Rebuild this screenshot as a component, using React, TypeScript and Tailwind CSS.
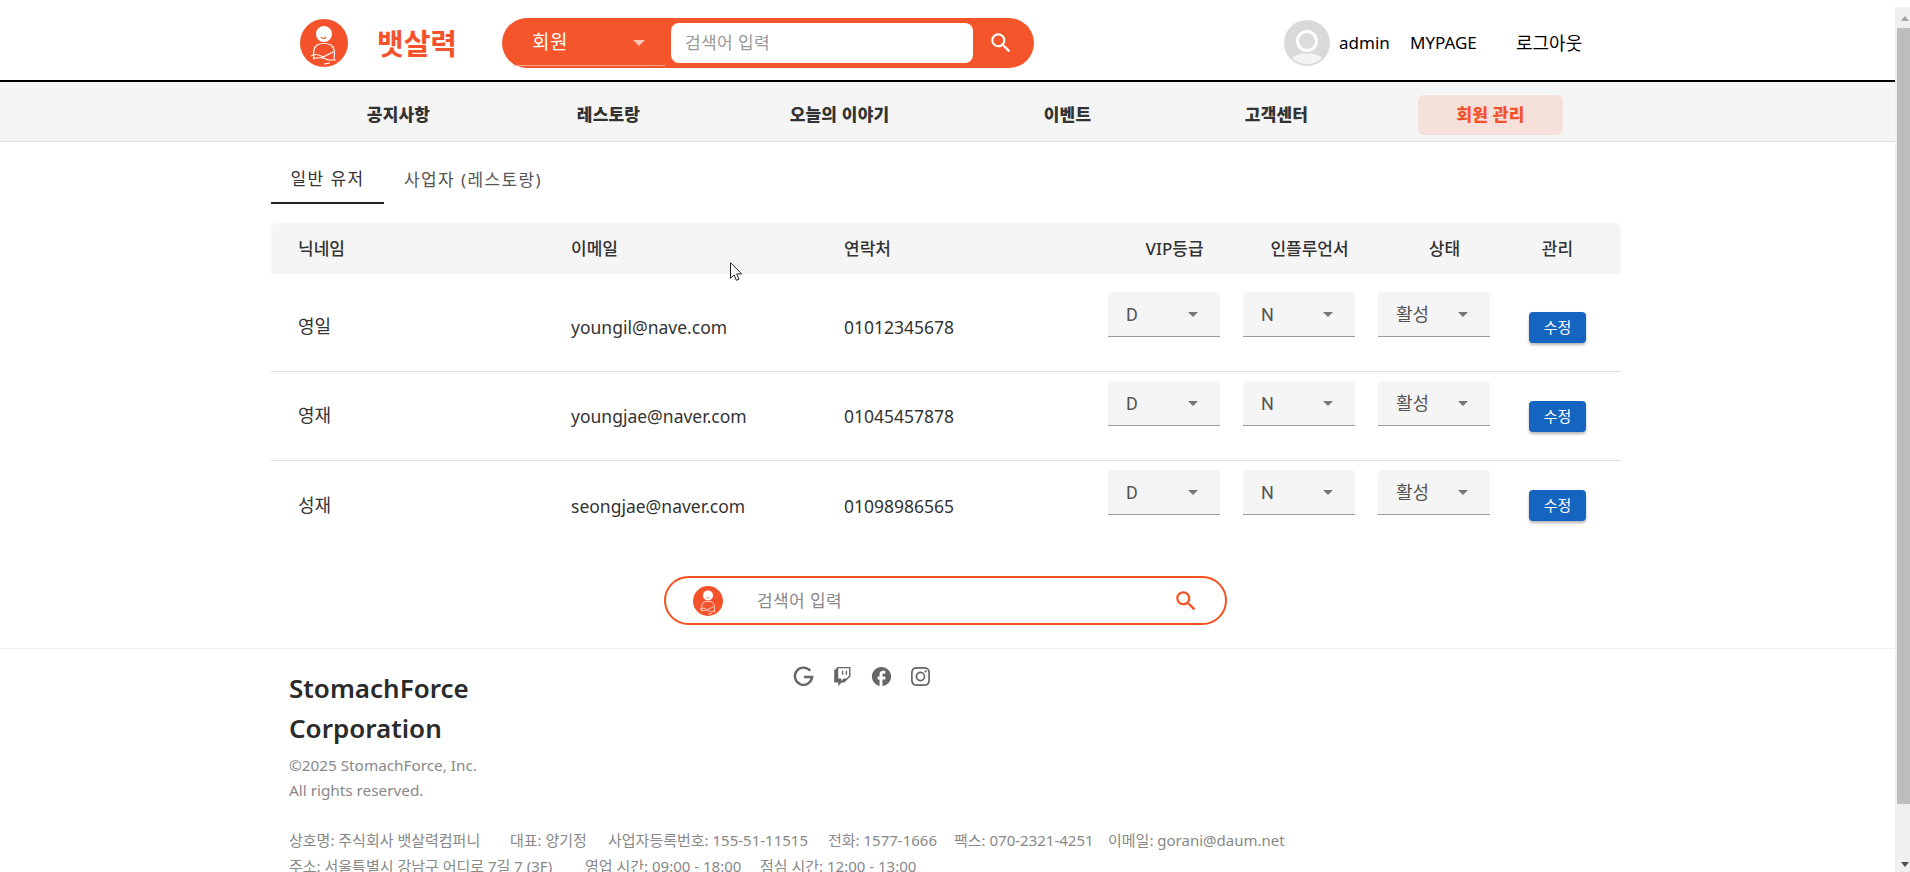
import { BsInstagram, BsTwitch } from 'react-icons/bs';
import { MdFacebook, MdSearch } from 'react-icons/md';

const navItems = ['공지사항', '레스토랑', '오늘의 이야기', '이벤트', '고객센터'];

const members = [
  { nick: '영일', email: 'youngil@nave.com', phone: '01012345678' },
  { nick: '영재', email: 'youngjae@naver.com', phone: '01045457878' },
  { nick: '성재', email: 'seongjae@naver.com', phone: '01098986565' },
];

const rowGrid = 'grid grid-cols-[300px_273px_248px_135px_135px_135px_121px]';

// Round mascot used by both search areas
function Logo({ className }: { className: string }) {
  return (
    <svg viewBox="0 0 48 48" className={className}>
      <circle cx="24" cy="24" r="24" fill="#f4522b" />
      <circle cx="24" cy="15" r="8" fill="#fff" />
      <path d="M21 18c1 2 3 2 5 0" fill="none" stroke="#f4522b" strokeWidth="1.2" />
      <path
        d="M14 40c-1-6 0-12 3-14 4-2 10-2 14 0 3 2 4 8 3 14"
        fill="#f4522b"
        stroke="#fff"
        strokeWidth="1.2"
      />
      <path
        d="M11 37c5-3 9-1 12 1l10-5M13 40c6-2 12-1 15 1l8 0M24 45l6-1"
        fill="none"
        stroke="#fff"
        strokeWidth="1.1"
      />
    </svg>
  );
}

function Select({ value }: { value: string }) {
  return (
    <div className="flex h-[45px] w-[112px] items-center justify-between rounded-t-[4px] border-b border-[#9a9a9a] bg-[#f5f5f5] pl-[18px] pr-[22px] font-['Roboto','Noto_Sans_CJK_KR',sans-serif] text-[18px] text-[#555]">
      <span>{value}</span>
      <span className="h-0 w-0 border-x-[5.5px] border-t-[5.5px] border-x-transparent border-t-[#757575]" />
    </div>
  );
}

function Header() {
  return (
    <header className="h-[82px] border-b-2 border-black">
      <div className="mx-auto flex h-[80px] w-[1353px] items-center pl-[29px] pt-[6px]">
        <div className="flex w-[202px] items-center">
          <Logo className="h-12 w-12" />
          <span className="ml-[29px] text-[29px] font-bold leading-none text-[#f4522b]">뱃살력</span>
        </div>
        <div className="flex h-[50px] w-[532px] items-center rounded-full bg-[#f4552b] pl-3">
          <div className="flex h-[46px] w-[151px] items-center justify-between border-b border-[#f9a58c] pl-[18px] pr-[20px] text-[19px] tracking-[0.5px] text-white">
            <span>회원</span>
            <span className="h-0 w-0 border-x-[6px] border-t-[6px] border-x-transparent border-t-[#fbc4b3]" />
          </div>
          <div className="ml-[6px] flex h-10 w-[302px] items-center rounded-lg bg-white pl-[14px] text-[17px] tracking-[0.4px] text-[#999]">
            검색어 입력
          </div>
          <MdSearch className="ml-[15px] text-white" size={26} />
        </div>
        <div className="ml-[250px] flex items-center text-[17px] text-black">
          <svg viewBox="0 0 46 46" className="h-[46px] w-[46px]">
            <circle cx="23" cy="23" r="23" fill="#d9d9d9" />
            <circle cx="23" cy="21" r="11" fill="#fff" />
            <circle cx="23" cy="21" r="8" fill="#dcdcdc" />
            <path d="M8 38c5-6 25-6 30 0-8 8-22 8-30 0z" fill="#f3f3f3" />
          </svg>
          <span className="ml-[9px] w-[71px]">admin</span>
          <span className="w-[106px]">MYPAGE</span>
          <span className="text-[18px]">로그아웃</span>
        </div>
      </div>
    </header>
  );
}

function Nav() {
  return (
    <nav className="h-[60px] border-b border-[#e0e0e0] bg-[#f5f5f5]">
      <div className="mx-auto grid h-[59px] w-[1353px] grid-cols-[247px_173px_305px_135px_283px_145px] items-center justify-items-center pl-[4px] pt-[7px] text-[17px] font-black tracking-[0.2px] text-[#333]">
        {navItems.map((item, index) => (
          <span key={item} className={index === 2 ? 'pr-[16px]' : ''}>
            {item}
          </span>
        ))}
        <span className="flex h-10 w-[145px] items-center justify-center rounded-[6px] bg-[#f5e0da] text-[#f4522b]">
          회원 관리
        </span>
      </div>
    </nav>
  );
}

function MemberTable() {
  return (
    <section className="mx-auto w-[1353px]">
      <div className="flex h-[62px] items-start pt-[14px] text-[17px] tracking-[1.4px]">
        <div className="flex h-[48px] w-[113px] items-center justify-center border-b-2 border-[#222] text-[#333]">
          일반 유저
        </div>
        <div className="flex h-[48px] items-center pl-[20px] text-[#555]">사업자 (레스토랑)</div>
      </div>
      <div className="mt-[19px] w-[1350px]">
        <div className={`${rowGrid} h-[51px] items-center rounded-t-[6px] bg-[#f5f5f5] text-[17px] font-medium text-[#333]`}>
          <div className="pl-[27px]">닉네임</div>
          <div>이메일</div>
          <div>연락처</div>
          <div className="pl-[30px] text-center">VIP등급</div>
          <div className="pl-[30px] text-center">인플루언서</div>
          <div className="pl-[30px] text-center">상태</div>
          <div className="text-center">관리</div>
        </div>
        <div className="pt-[9px]">
          {members.map((member, index) => (
            <div
              key={member.email}
              className={`${rowGrid} h-[89px] items-center text-[17.5px] text-[#333] ${index < 2 ? 'border-b border-[#e0e0e0]' : ''}`}
            >
              <div className="pb-[1px] pl-[27px] text-[18px]">{member.nick}</div>
              <div className="pt-[1px]">{member.email}</div>
              <div className="pt-[1px]">{member.phone}</div>
              <div className="self-start pl-[16px] pt-[9px]">
                <Select value="D" />
              </div>
              <div className="self-start pl-[16px] pt-[9px]">
                <Select value="N" />
              </div>
              <div className="self-start pl-[16px] pt-[9px]">
                <Select value="활성" />
              </div>
              <div className="flex justify-center">
                <span className="flex h-[31px] w-[57px] items-center justify-center rounded-[4px] bg-[#1565c0] text-[15px] text-white shadow-[0_2px_3px_rgba(0,0,0,0.3)]">
                  수정
                </span>
              </div>
            </div>
          ))}
        </div>
      </div>
    </section>
  );
}

function BottomSearch() {
  return (
    <div className="mt-[26px] flex justify-center pr-[4px]">
      <div className="flex h-[49px] w-[563px] items-center rounded-full border-2 border-[#f4511e] pl-[27px] pr-[24px]">
        <Logo className="h-[30px] w-[30px]" />
        <span className="ml-[34px] flex-1 text-[17px] tracking-[0.4px] text-[#888]">검색어 입력</span>
        <MdSearch className="mr-[2px] text-[#f4511e]" size={26} />
      </div>
    </div>
  );
}

function Footer() {
  return (
    <footer className="mt-[23px] border-t border-[#eee]">
      <div className="mx-auto w-[1353px] pl-[18px] pt-[19px]">
        <div className="flex items-start">
          <div className="w-[502px]">
            <h2 className="w-[230px] text-[26px] font-semibold leading-[40px] text-[#2b2b2b]">
              StomachForce Corporation
            </h2>
            <p className="mt-[5px] text-[15.3px] leading-[25px] text-[#888]">
              ©2025 StomachForce, Inc.
              <br />
              All rights reserved.
            </p>
          </div>
          <div className="-mt-[3px] ml-[1px] flex items-center gap-[18px] text-[#666]">
            <svg viewBox="0 0 24 24" className="h-[23px] w-[23px]" fill="none" stroke="currentColor" strokeWidth="2.5">
              <path d="M19 6a9 9 0 1 0 2 6.5H12.5" />
            </svg>
            <BsTwitch size={19} />
            <MdFacebook size={23} />
            <BsInstagram size={19} />
          </div>
        </div>
        <div className="mt-[24px] text-[15px] leading-[26px] text-[#888]">
          <div className="flex">
            <span className="w-[221px]">상호명: 주식회사 뱃살력컴퍼니</span>
            <span className="w-[98px]">대표: 양기정</span>
            <span className="w-[220px]">사업자등록번호: 155-51-11515</span>
            <span className="w-[126px]">전화: 1577-1666</span>
            <span className="w-[154px]">팩스: 070-2321-4251</span>
            <span>이메일: gorani@daum.net</span>
          </div>
          <div className="flex">
            <span className="w-[296px]">주소: 서울특별시 강남구 어디로 7길 7 (3F)</span>
            <span className="w-[175px]">영업 시간: 09:00 - 18:00</span>
            <span>점심 시간: 12:00 - 13:00</span>
          </div>
        </div>
      </div>
    </footer>
  );
}

function Scrollbar() {
  return (
    <div className="mt-[7px] flex w-[15px] flex-col items-end bg-[#f0f0f0]">
      <div className="flex h-[21px] w-full items-center justify-center pl-[5px] pt-[1px]">
        <span className="h-0 w-0 border-x-[4px] border-b-[5px] border-x-transparent border-b-[#a3a3a3]" />
      </div>
      <div className="h-[776px] w-[13px] bg-[#bdbdbd]" />
      <div className="flex flex-1 items-end justify-center self-stretch pb-[5px] pl-[5px]">
        <span className="h-0 w-0 border-x-[4px] border-t-[5px] border-x-transparent border-t-[#505050]" />
      </div>
    </div>
  );
}

export default function App() {
  return (
    <div className="relative flex h-[872px] w-[1910px] overflow-hidden bg-white font-['Noto_Sans','Noto_Sans_CJK_KR',sans-serif]">
      <main className="h-[872px] w-[1895px] overflow-hidden">
        <Header />
        <Nav />
        <MemberTable />
        <BottomSearch />
        <Footer />
      </main>
      <Scrollbar />
      {/* mouse pointer caught in the screenshot */}
      <svg viewBox="0 0 12 19" className="absolute left-[730px] top-[262px] h-[19px] w-[12px]">
        <path d="M.5.7v15.6l3.6-3.4 2.3 5.4 2.6-1.1-2.3-5.3h5z" fill="#fff" stroke="#222" strokeWidth="1" />
      </svg>
    </div>
  );
}
